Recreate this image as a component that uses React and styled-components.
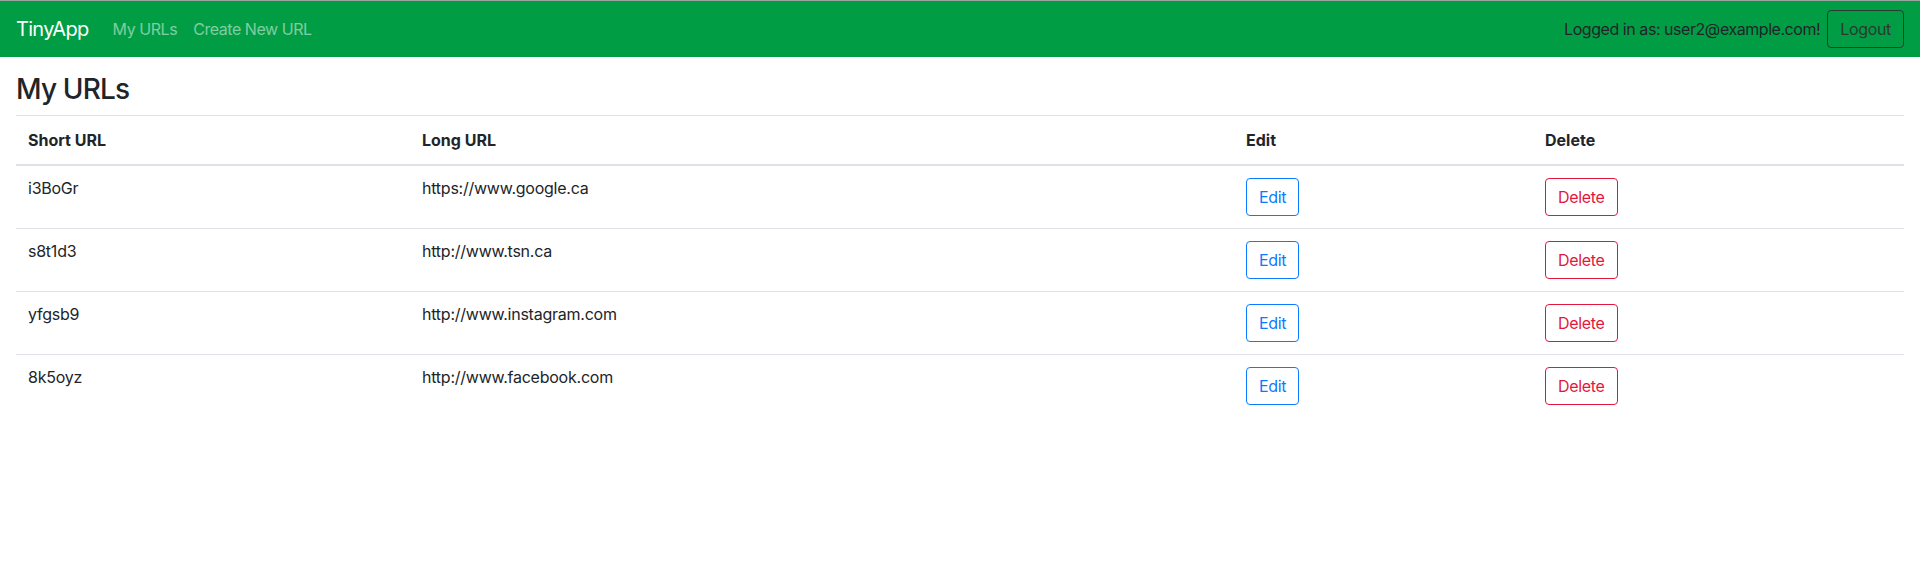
import React from "react";
import styled, { createGlobalStyle } from "styled-components";

const GlobalStyle = createGlobalStyle`
  * { box-sizing: border-box; }
  body {
    margin: 0;
    font-family: Inter, "Noto Sans", "Liberation Sans", sans-serif;
    font-size: 16px;
    line-height: 1.5;
    color: #212529;
    background: #fff;
  }
`;

const Navbar = styled.nav`
  display: flex;
  align-items: center;
  justify-content: space-between;
  height: 57px;
  padding: 0 16px;
  background: #009d44;
  border-top: 1px solid #9aa59e;
  letter-spacing: -0.028em;
`;

const NavLeft = styled.div`
  display: flex;
  align-items: center;
`;

const Brand = styled.a`
  font-size: 20px;
  color: #fff;
  text-decoration: none;
  margin-right: 16px;
  padding: 5px 0;
  letter-spacing: -0.035em;
`;

const NavLink = styled.a`
  color: rgba(255, 255, 255, 0.5);
  text-decoration: none;
  padding: 8px;
`;

const NavRight = styled.div`
  display: flex;
  align-items: center;
  gap: 7px;
`;

const LoggedIn = styled.span`
  color: #212529;
`;

const Button = styled.button`
  font-family: inherit;
  font-size: 16px;
  line-height: 1.5;
  letter-spacing: -0.02em;
  height: 38px;
  padding: 6px 12px;
  border-radius: 4px;
  background: transparent;
  color: ${(p) => p.$color};
  border: 1px solid ${(p) => p.$color};
  cursor: pointer;
`;

const Main = styled.main`
  padding: 0 16px;
`;

const Title = styled.h1`
  font-size: 28px;
  font-weight: 500;
  line-height: 1.2;
  letter-spacing: -0.03em;
  margin: 16px 0 8px;
`;

const Table = styled.table`
  width: 100%;
  border-collapse: collapse;
  table-layout: fixed;
`;

const Th = styled.th`
  text-align: left;
  font-weight: 700;
  padding: 12px;
  vertical-align: bottom;
  border-top: 1px solid #dee2e6;
  border-bottom: 2px solid #dee2e6;
  width: ${(p) => p.$w}px;
`;

const Td = styled.td`
  padding: 10px 12px 12px;
  vertical-align: top;
  border-top: 1px solid #dee2e6;
  letter-spacing: -0.015em;
`;

const ButtonCell = styled(Td)`
  padding-top: 12px;
`;

const urls = [
  { id: "i3BoGr", long: "https://www.google.ca" },
  { id: "s8t1d3", long: "http://www.tsn.ca" },
  { id: "yfgsb9", long: "http://www.instagram.com" },
  { id: "8k5oyz", long: "http://www.facebook.com" },
];

export default function App() {
  return (
    <>
      <GlobalStyle />
      <Navbar>
        <NavLeft>
          <Brand href="#">TinyApp</Brand>
          <NavLink href="#">My URLs</NavLink>
          <NavLink href="#">Create New URL</NavLink>
        </NavLeft>
        <NavRight>
          <LoggedIn>Logged in as: user2@example.com!</LoggedIn>
          <Button $color="#2b3a30">Logout</Button>
        </NavRight>
      </Navbar>
      <Main>
        <Title>My URLs</Title>
        <Table>
          <thead>
            <tr>
              <Th $w={394}>Short URL</Th>
              <Th $w={824}>Long URL</Th>
              <Th $w={299}>Edit</Th>
              <Th $w={371}>Delete</Th>
            </tr>
          </thead>
          <tbody>
            {urls.map((u) => (
              <tr key={u.id}>
                <Td>{u.id}</Td>
                <Td>{u.long}</Td>
                <ButtonCell>
                  <Button $color="#0a7bff">Edit</Button>
                </ButtonCell>
                <ButtonCell>
                  <Button $color="#e3173d">Delete</Button>
                </ButtonCell>
              </tr>
            ))}
          </tbody>
        </Table>
      </Main>
    </>
  );
}
